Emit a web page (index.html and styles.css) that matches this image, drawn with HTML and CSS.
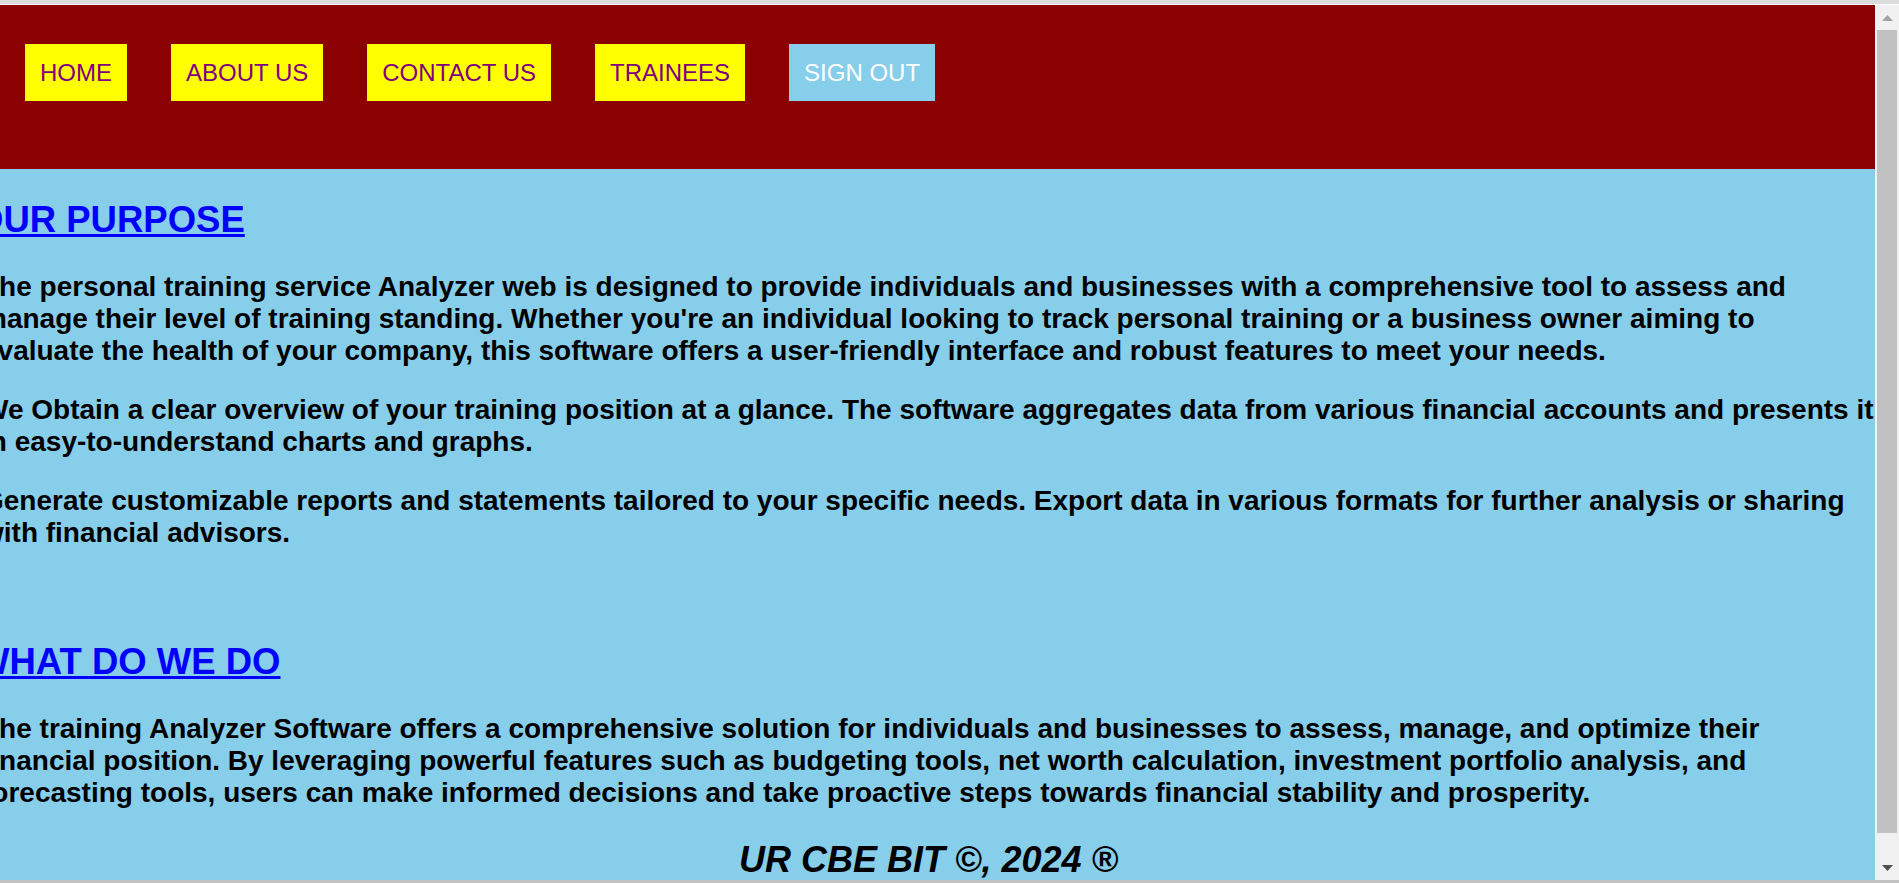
FILE: index.html
```html
<!DOCTYPE html>
<html lang="en">
<head>
<meta charset="utf-8">
<title>Training Analyzer</title>
<link rel="stylesheet" href="styles.css">
</head>
<body>
<div class="strip-top"></div>
<div class="window">
  <div class="page">
    <header class="topbar">
      <nav class="menu">
        <a class="btn" href="#">HOME</a>
        <a class="btn" href="#">ABOUT US</a>
        <a class="btn" href="#">CONTACT US</a>
        <a class="btn" href="#">TRAINEES</a>
        <a class="btn btn-out" href="#">SIGN OUT</a>
      </nav>
    </header>
    <main class="content">
      <section class="block block-first">
        <h2 class="title"><a href="#">OUR PURPOSE</a></h2>
        <p class="text">The personal training service Analyzer web is designed to provide individuals and businesses with a comprehensive tool to assess and manage their level of training standing. Whether you're an individual looking to track personal training or a business owner aiming to evaluate&nbsp;the health of your company, this software offers a user-friendly interface and robust features to meet your needs.</p>
        <p class="text">We Obtain a clear overview of your training position at a glance. The software aggregates data from various financial accounts and presents it in easy-to-understand charts and graphs.</p>
        <p class="text">Generate customizable reports and statements tailored to your specific needs. Export data in various formats for further analysis or sharing with financial advisors.</p>
      </section>
      <section class="block">
        <h2 class="title"><a href="#">WHAT DO WE DO</a></h2>
        <p class="text">The training Analyzer Software offers a comprehensive solution for individuals and businesses to assess, manage, and optimize their financial position. By leveraging powerful features such as budgeting tools, net worth calculation, investment portfolio analysis, and forecasting tools, users can make informed decisions and take proactive steps towards financial stability and prosperity.</p>
      </section>
      <footer class="foot">UR CBE BIT &copy;, 2024 &reg;</footer>
    </main>
  </div>
  <div class="scrollbar">
    <div class="sb-btn sb-up"><svg width="11" height="6" viewBox="0 0 11 6"><path d="M5.5 0 L11 6 L0 6 Z" fill="#a3a3a3"/></svg></div>
    <div class="sb-track"><div class="sb-thumb"></div></div>
    <div class="sb-btn sb-down"><svg width="11" height="6" viewBox="0 0 11 6"><path d="M0 0 L11 0 L5.5 6 Z" fill="#505050"/></svg></div>
  </div>
</div>
<div class="strip-bottom"></div>
</body>
</html>
```
FILE: styles.css
```css
html, body {
  margin: 0;
  padding: 0;
  height: 100%;
  overflow: hidden;
}
body {
  font-family: "Liberation Sans", Arial, sans-serif;
  display: flex;
  flex-direction: column;
  background: #ffffff;
}
.strip-top {
  height: 4px;
  background: #dcdcdc;
  border-bottom: 1px solid #ffffff;
  flex: none;
}
.strip-bottom {
  height: 3px;
  background: #c2c2c2;
  flex: none;
}
.window {
  flex: 1;
  display: flex;
  min-height: 0;
}
.page {
  flex: 1;
  display: flex;
  flex-direction: column;
  overflow: hidden;
  min-width: 0;
}
.topbar {
  background: #8b0000;
  height: 164px;
  box-sizing: border-box;
  padding: 39px 0 0 25px;
  flex: none;
}
.menu {
  display: flex;
  gap: 44px;
}
.btn {
  display: block;
  background: #ffff00;
  color: #800080;
  font-size: 24px;
  line-height: 27px;
  padding: 15px 15px;
  text-decoration: none;
}
.btn-out {
  background: #87ceeb;
  color: #ffffff;
}
.content {
  flex: 1;
  background: #87ceeb;
  padding-top: 31px;
  margin-left: -18px;
  overflow: hidden;
}
.block-first {
  margin-bottom: 93px;
}
.title {
  margin: 0 0 31px -7px;
  font-size: 36.5px;
  line-height: 40px;
  font-weight: bold;
}
.title a {
  color: #0000ff;
  text-decoration: underline;
}
.text {
  margin: 0 0 27px 0;
  font-size: 28px;
  line-height: 32px;
  font-weight: bold;
  color: #000000;
}
.block .text:last-child {
  margin-bottom: 0;
}
.foot {
  margin-top: 31px;
  text-align: center;
  font-size: 36px;
  line-height: 40px;
  font-weight: bold;
  font-style: italic;
  color: #000000;
}
.scrollbar {
  width: 24px;
  flex: none;
  background: #f1f1f1;
  display: flex;
  flex-direction: column;
}
.sb-btn {
  height: 25px;
  display: flex;
  align-items: center;
  justify-content: center;
  flex: none;
}
.sb-track {
  flex: 1;
  padding: 0 2px 0 2px;
  display: flex;
  flex-direction: column;
}
.sb-thumb {
  height: 803px;
  background: #c1c1c1;
}
```
